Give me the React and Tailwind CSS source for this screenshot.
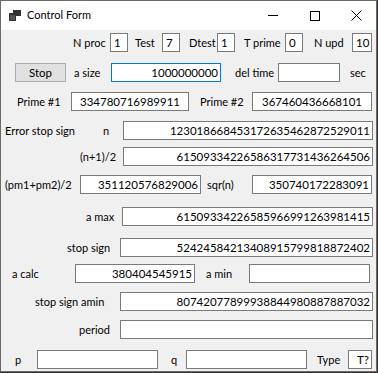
import React from "react";

const font = { fontFamily: 'Lato, "Liberation Sans", Arial, sans-serif' };

function Box({ className = "", children, align = "right", focused = false }) {
  const al = align === "right" ? "justify-end pr-[2px]" : align === "center" ? "justify-center" : "justify-start pl-[3px]";
  return (
    <div
      className={`h-[19px] bg-white border flex items-center text-[11.5px] leading-none text-black whitespace-nowrap overflow-hidden ${al} ${focused ? "border-[#0078d7]" : "border-[#7a7a7a]"} ${className}`}
    >
      {children}
    </div>
  );
}

function Lbl({ className = "", children }) {
  return <div className={`text-[11px] leading-none text-black whitespace-nowrap ${className}`}>{children}</div>;
}

export default function App() {
  return (
    <div className="w-[378px] h-[373px] bg-[#3a3028] overflow-hidden" style={font}>
      <div className="w-[377px] h-[372px] border border-[#6b6b6b] bg-[#f0f0f0] flex flex-col">
        {/* title bar */}
        <div className="h-[29px] bg-white flex items-center shrink-0">
          <svg className="ml-[8px]" width="12" height="11" viewBox="0 0 12 11">
            <rect x="4" y="0" width="8" height="6" fill="#333" />
            <rect x="0" y="3" width="7" height="8" fill="#333" />
            <rect x="1" y="5" width="5" height="5" fill="#555" />
          </svg>
          <span className="ml-[6px] text-[11px] text-black">Control Form</span>
          <div className="ml-auto flex items-center h-full">
            <div className="w-[42px] h-full flex items-center justify-center">
              <div className="w-[10px] h-px bg-black" />
            </div>
            <div className="w-[42px] h-full flex items-center justify-center">
              <div className="w-[10px] h-[10px] border border-black" />
            </div>
            <div className="w-[40px] h-full flex items-center justify-center">
              <svg width="11" height="11" viewBox="0 0 11 11">
                <path d="M0.5 0.5 L10.5 10.5 M10.5 0.5 L0.5 10.5" stroke="#000" strokeWidth="1" />
              </svg>
            </div>
          </div>
        </div>

        {/* row 1 */}
        <div className="flex items-center mt-[3px] h-[19px]">
          <Lbl className="ml-[72px] w-[37px]">N proc</Lbl>
          <Box className="w-[18px]" align="left">1</Box>
          <Lbl className="w-[34px] pl-[7px]">Test</Lbl>
          <Box className="w-[18px]" align="left">7</Box>
          <Lbl className="w-[37px] pl-[9px]">Dtest</Lbl>
          <Box className="w-[18px]" align="left">1</Box>
          <Lbl className="w-[50px] pl-[9px]">T prime</Lbl>
          <Box className="w-[18px]" align="left">0</Box>
          <Lbl className="w-[49px] pl-[11px]">N upd</Lbl>
          <Box className="w-[20px]" align="left">10</Box>
        </div>

        {/* row 2 */}
        <div className="flex items-center mt-[11px] h-[19px]">
          <button className="ml-[14px] w-[51px] h-[19px] bg-[#e1e1e1] border border-[#adadad] text-[11.5px] text-black leading-none">
            Stop
          </button>
          <Lbl className="w-[45px] pl-[8px]">a size</Lbl>
          <Box className="w-[110px]" focused>1000000000</Box>
          <Lbl className="w-[57px] pl-[14px]">del time</Lbl>
          <Box className="w-[62px]"></Box>
          <Lbl className="pl-[10px]">sec</Lbl>
        </div>

        {/* row 3 */}
        <div className="flex items-center mt-[10px] h-[19px]">
          <Lbl className="ml-[16px] w-[54px]">Prime #1</Lbl>
          <Box className="w-[118px]" align="center">334780716989911</Box>
          <Lbl className="w-[63px] pl-[11px]">Prime #2</Lbl>
          <Box className="w-[120px]" align="center">367460436668101</Box>
        </div>

        {/* row 4 */}
        <div className="flex items-center mt-[10px] h-[19px]">
          <Lbl className="ml-[4px] w-[98px]">Error stop sign</Lbl>
          <Lbl className="w-[20px]">n</Lbl>
          <Box className="w-[250px]">123018668453172635462872529011</Box>
        </div>

        {/* row 5 */}
        <div className="flex items-center mt-[7px] h-[19px]">
          <Lbl className="ml-[79px] w-[43px]">(n+1)/2</Lbl>
          <Box className="w-[250px]">61509334226586317731436264506</Box>
        </div>

        {/* row 6 */}
        <div className="flex items-center mt-[9px] h-[19px]">
          <Lbl className="ml-[4px] w-[75px]">(pm1+pm2)/2</Lbl>
          <Box className="w-[121px]">351120576829006</Box>
          <Lbl className="w-[51px] pl-[6px]">sqr(n)</Lbl>
          <Box className="w-[120px]">350740172283091</Box>
        </div>

        {/* row 7 */}
        <div className="flex items-center mt-[13px] h-[19px]">
          <Lbl className="ml-[85px] w-[36px]">a max</Lbl>
          <Box className="w-[251px]">61509334226585966991263981415</Box>
        </div>

        {/* row 8 */}
        <div className="flex items-center mt-[12px] h-[19px]">
          <Lbl className="ml-[66px] w-[53px]">stop sign</Lbl>
          <Box className="w-[253px]">52424584213408915799818872402</Box>
        </div>

        {/* row 9 */}
        <div className="flex items-center mt-[7px] h-[19px]">
          <Lbl className="ml-[11px] w-[63px]">a calc</Lbl>
          <Box className="w-[120px]">380404545915</Box>
          <Lbl className="w-[54px] pl-[11px]">a min</Lbl>
          <Box className="w-[121px]"></Box>
        </div>

        {/* row 10 */}
        <div className="flex items-center mt-[9px] h-[19px]">
          <Lbl className="ml-[34px] w-[85px]">stop sign amin</Lbl>
          <Box className="w-[253px]">80742077899938844980887887032</Box>
        </div>

        {/* row 11 */}
        <div className="flex items-center mt-[9px] h-[19px]">
          <Lbl className="ml-[78px] w-[41px]">period</Lbl>
          <Box className="w-[253px]"></Box>
        </div>

        {/* row 12 */}
        <div className="flex items-center mt-[11px] h-[19px]">
          <Lbl className="ml-[14px] w-[22px]">p</Lbl>
          <Box className="w-[121px]"></Box>
          <Lbl className="w-[28px] pl-[13px]">q</Lbl>
          <Box className="w-[121px]"></Box>
          <Lbl className="w-[41px] pl-[10px]">Type</Lbl>
          <Box className="w-[24px]" align="right">T?</Box>
        </div>
      </div>
    </div>
  );
}
